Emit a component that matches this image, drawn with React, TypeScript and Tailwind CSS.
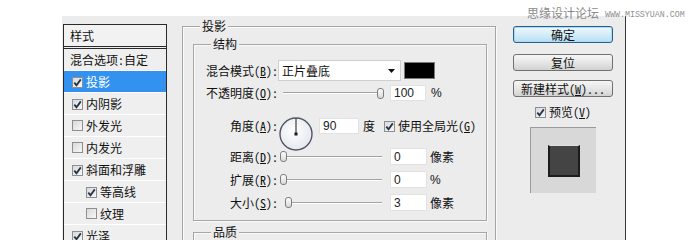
import React from "react";

function Check({ on }: { on: boolean }) {
  return (
    <span className="inline-flex w-[11px] h-[11px] shrink-0 items-center justify-center border border-[#8e8f8f] bg-gradient-to-br from-[#d8d9db] to-[#f7f7f7]">
      {on && (
        <svg width="9" height="9" viewBox="0 0 9 9">
          <path d="M1.3 4.6 L3.5 7.2 L7.8 1.4" stroke="#26344a" strokeWidth="1.8" fill="none" />
        </svg>
      )}
    </span>
  );
}

function Thumb() {
  return <div className="w-[7px] h-[11px] shrink-0 rounded-[3px] border border-[#7d7d7d] bg-gradient-to-b from-[#fdfdfd] to-[#d9d9d9]" />;
}

function Num({ v, w }: { v: string; w: string }) {
  return (
    <div className={`${w} h-[17px] shrink-0 bg-white border border-[#e2e2e2] pl-[3px] flex items-center font-['Liberation_Sans',sans-serif] text-[12px] text-[#222]`}>
      {v}
    </div>
  );
}

function ListRow({ on, label, indent, selected, plain }: { on?: boolean; label: string; indent?: boolean; selected?: boolean; plain?: boolean }) {
  return (
    <div className={`h-[22px] border-b border-white flex items-center ${selected ? "bg-[#3392f0] text-white" : ""}`}>
      {plain ? (
        <span className="pl-[6px]">{label}</span>
      ) : (
        <>
          <span className={indent ? "ml-[22px]" : "ml-[8px]"}>
            <Check on={!!on} />
          </span>
          <span className="ml-[3px]">{label}</span>
        </>
      )}
    </div>
  );
}

export default function App() {
  return (
    <div className="relative w-[700px] h-[247px] bg-white overflow-hidden font-['Noto_Sans_Mono_CJK_SC','Noto_Sans_CJK_SC',sans-serif] text-[12px] leading-[16px] text-[#111]">
      <div className="pl-[62px] pt-[16px]">
        <div className="w-[564px] h-[224px] bg-[#ececec] border-r border-[#3a3a3a] overflow-hidden flex items-start">
          {/* style list */}
          <div className="ml-[1px] mt-[8px] w-[104px] shrink-0 border border-[#2b2b2b] bg-[#efefef]">
            <div className="h-[21px] flex items-center pl-[6px] bg-[#f2f2f2]">样式</div>
            <div className="h-[3px] border-y border-[#2b2b2b]" />
            <ListRow plain label="混合选项:自定" />
            <ListRow on selected label="投影" />
            <ListRow on label="内阴影" />
            <ListRow label="外发光" />
            <ListRow label="内发光" />
            <ListRow on label="斜面和浮雕" />
            <ListRow on indent label="等高线" />
            <ListRow indent label="纹理" />
            <ListRow on label="光泽" />
          </div>

          {/* main group */}
          <fieldset className="ml-[15px] mt-[2px] w-[314px] h-[280px] shrink-0 border border-[#a6a6a6] shadow-[inset_1px_1px_0_#fafafa,1px_1px_0_#fafafa]">
            <legend className="ml-[17px] px-[2px] leading-[16px] bg-[#ececec]">投影</legend>
            <fieldset className="ml-[10px] mt-[2px] w-[294px] h-[185px] border border-[#a6a6a6] shadow-[inset_1px_1px_0_#fafafa,1px_1px_0_#fafafa]">
              <legend className="ml-[17px] px-[2px] leading-[16px] bg-[#ececec]">结构</legend>

              {/* blend mode */}
              <div className="mt-[8px] h-[21px] flex items-center">
                <div className="w-[84px] shrink-0 text-right">混合模式(<u>B</u>):</div>
                <div className="w-[123px] h-[21px] bg-white border border-[#cfcfcf] flex items-center justify-between pl-[3px] pr-[5px]">
                  <span>正片叠底</span>
                  <svg width="7" height="4" viewBox="0 0 7 4">
                    <path d="M0 0 H7 L3.5 4 Z" fill="#111" />
                  </svg>
                </div>
                <div className="ml-[3px] w-[31px] h-[17px] border border-[#7a7a7a] bg-black" />
              </div>

              {/* opacity */}
              <div className="mt-[4px] h-[16px] flex items-center">
                <div className="w-[84px] shrink-0 text-right">不透明度(<u>O</u>):</div>
                <div className="ml-[5px] w-[94px] h-[2px] border-t border-[#a3a3a3] bg-white" />
                <Thumb />
                <div className="ml-[6px]">
                  <div className="w-[36px] h-[16px] bg-white border border-[#e2e2e2] pl-[3px] flex items-center font-['Liberation_Sans',sans-serif] text-[12px] text-[#222]">100</div>
                </div>
                <span className="ml-[5px] font-['Liberation_Sans',sans-serif]">%</span>
              </div>

              {/* angle */}
              <div className="mt-[16px] h-[31px] flex items-start">
                <div className="mt-[1px] w-[84px] shrink-0 text-right">角度(<u>A</u>):</div>
                <svg width="34" height="34" viewBox="0 0 34 34" className="shrink-0 ml-[1px]">
                  <defs>
                    <radialGradient id="dg" cx="0.45" cy="0.4" r="0.6">
                      <stop offset="0" stopColor="#ffffff" />
                      <stop offset="1" stopColor="#e6e8ee" />
                    </radialGradient>
                  </defs>
                  <circle cx="17" cy="17" r="16" fill="url(#dg)" stroke="#4d5566" strokeWidth="1.4" />
                  <line x1="17" y1="17" x2="17" y2="1.5" stroke="#1a1a1a" strokeWidth="1" />
                  <rect x="15.5" y="15.5" width="3" height="3" fill="#1a1a1a" />
                </svg>
                <div className="ml-[6px] mt-[1px]">
                  <div className="w-[40px] h-[16px] bg-white border border-[#e2e2e2] pl-[3px] flex items-center font-['Liberation_Sans',sans-serif] text-[12px] text-[#222]">90</div>
                </div>
                <div className="mt-[1px] h-[16px] flex items-center">
                  <span className="ml-[4px]">度</span>
                  <span className="ml-[9px]">
                    <Check on />
                  </span>
                  <span className="ml-[3px]">使用全局光(<u>G</u>)</span>
                </div>
              </div>

              {/* distance */}
              <div className="h-[17px] flex items-center">
                <div className="w-[84px] shrink-0 text-right">距离(<u>D</u>):</div>
                <div className="ml-[2px]"><Thumb /></div>
                <div className="w-[95px] h-[2px] border-t border-[#a3a3a3] bg-white" />
                <div className="ml-[8px]"><Num v="0" w="w-[37px]" /></div>
                <span className="ml-[3px]">像素</span>
              </div>

              {/* spread */}
              <div className="mt-[6px] h-[17px] flex items-center">
                <div className="w-[84px] shrink-0 text-right">扩展(<u>R</u>):</div>
                <div className="ml-[2px]"><Thumb /></div>
                <div className="w-[95px] h-[2px] border-t border-[#a3a3a3] bg-white" />
                <div className="ml-[8px]"><Num v="0" w="w-[37px]" /></div>
                <span className="ml-[3px] font-['Liberation_Sans',sans-serif]">%</span>
              </div>

              {/* size */}
              <div className="mt-[6px] h-[17px] flex items-center">
                <div className="w-[84px] shrink-0 text-right">大小(<u>S</u>):</div>
                <div className="ml-[7px]"><Thumb /></div>
                <div className="w-[90px] h-[2px] border-t border-[#a3a3a3] bg-white" />
                <div className="ml-[8px]"><Num v="3" w="w-[37px]" /></div>
                <span className="ml-[3px]">像素</span>
              </div>
            </fieldset>

            <fieldset className="ml-[10px] mt-[3px] w-[294px] h-[60px] border border-[#a6a6a6] shadow-[inset_1px_1px_0_#fafafa,1px_1px_0_#fafafa]">
              <legend className="ml-[17px] px-[2px] leading-[16px] bg-[#ececec]">品质</legend>
            </fieldset>
          </fieldset>

          {/* buttons */}
          <div className="ml-[17px] mt-[10px] w-[100px] shrink-0 flex flex-col">
            <button className="h-[17px] w-[100px] rounded-[3px] border border-[#2d5f86] bg-gradient-to-b from-[#eef8fd] via-[#d4edf9] to-[#b6def3] shadow-[inset_0_0_0_1px_#a6dcf7] flex items-center justify-center leading-[14px]">
              确定
            </button>
            <button className="mt-[11px] h-[17px] w-[100px] rounded-[3px] border border-[#707070] bg-gradient-to-b from-[#f6f6f6] via-[#e6e6e6] to-[#d2d2d2] flex items-center justify-center leading-[14px]">
              复位
            </button>
            <button className="mt-[9px] h-[17px] w-[100px] rounded-[3px] border border-[#707070] bg-gradient-to-b from-[#f6f6f6] via-[#e6e6e6] to-[#d2d2d2] flex items-center justify-center leading-[14px]">
              新建样式(<u>W</u>)...
            </button>
            <div className="mt-[8px] h-[14px] pl-[22px] flex items-center">
              <Check on />
              <span className="ml-[3px]">预览(<u>V</u>)</span>
            </div>
            <div className="mt-[8px] ml-[17px] w-[66px] h-[66px] bg-[#d8d8d8] border-l border-t border-[#9a9a9a] flex items-center justify-center">
              <div className="w-[32px] h-[32px] bg-[#444] border-2 border-[#1c1c1c] border-t-[#e0e0e0] border-t" />
            </div>
          </div>
        </div>
      </div>

      {/* watermark */}
      <div className="absolute left-[527px] top-[6px] flex items-end text-[#8a8a8a]">
        <span className="font-['Noto_Sans_CJK_SC',sans-serif] text-[12px] leading-[14px]">思缘设计论坛</span>
        <span className="ml-[6px] font-['Liberation_Mono',monospace] text-[8.3px] leading-[10px] text-[#909090]">WWW.MISSYUAN.COM</span>
      </div>
    </div>
  );
}
